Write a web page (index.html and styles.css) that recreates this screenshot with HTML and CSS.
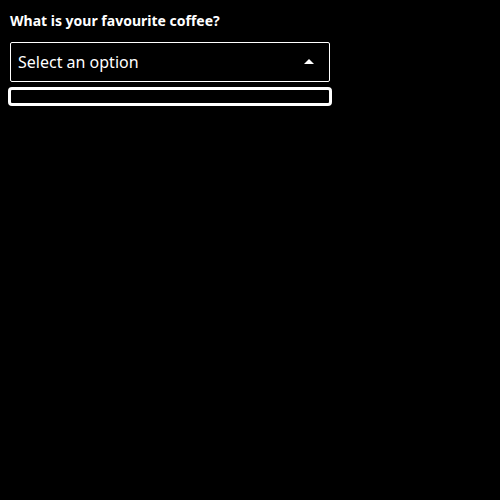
FILE: index.html
```html
<!DOCTYPE html>
<html>
<head>
<meta charset="utf-8">
<link rel="stylesheet" href="styles.css">
</head>
<body>
<div class="field">
  <label class="label">What is your favourite coffee?</label>
  <div class="select">
    <span class="value">Select an option</span>
    <svg class="caret" width="10" height="5" viewBox="0 0 10 5"><path d="M0 5 L5 0 L10 5 Z" fill="#fff"/></svg>
  </div>
  <div class="listbox"></div>
</div>
</body>
</html>
```
FILE: styles.css
```css
html, body {
  margin: 0;
  background: #000;
  color: #fff;
  font-family: "Noto Sans", "Open Sans", sans-serif;
}
.field {
  padding: 10px;
  width: 320px;
  display: flex;
  flex-direction: column;
}
.label {
  font-size: 14px;
  font-weight: 700;
  line-height: 20px;
  margin-top: 1px;
  margin-bottom: 11px;
}
.select {
  box-sizing: border-box;
  height: 40px;
  border: 1px solid #fff;
  border-radius: 2px;
  display: flex;
  align-items: center;
  justify-content: space-between;
  padding: 0 15px 0 7px;
}
.value {
  font-size: 16px;
}
.caret {
  display: block;
  margin-top: -2px;
}
.listbox {
  box-sizing: border-box;
  margin: 5px -2px 0 -2px;
  height: 19px;
  border: 3px solid #fff;
  border-radius: 4px;
}
```
